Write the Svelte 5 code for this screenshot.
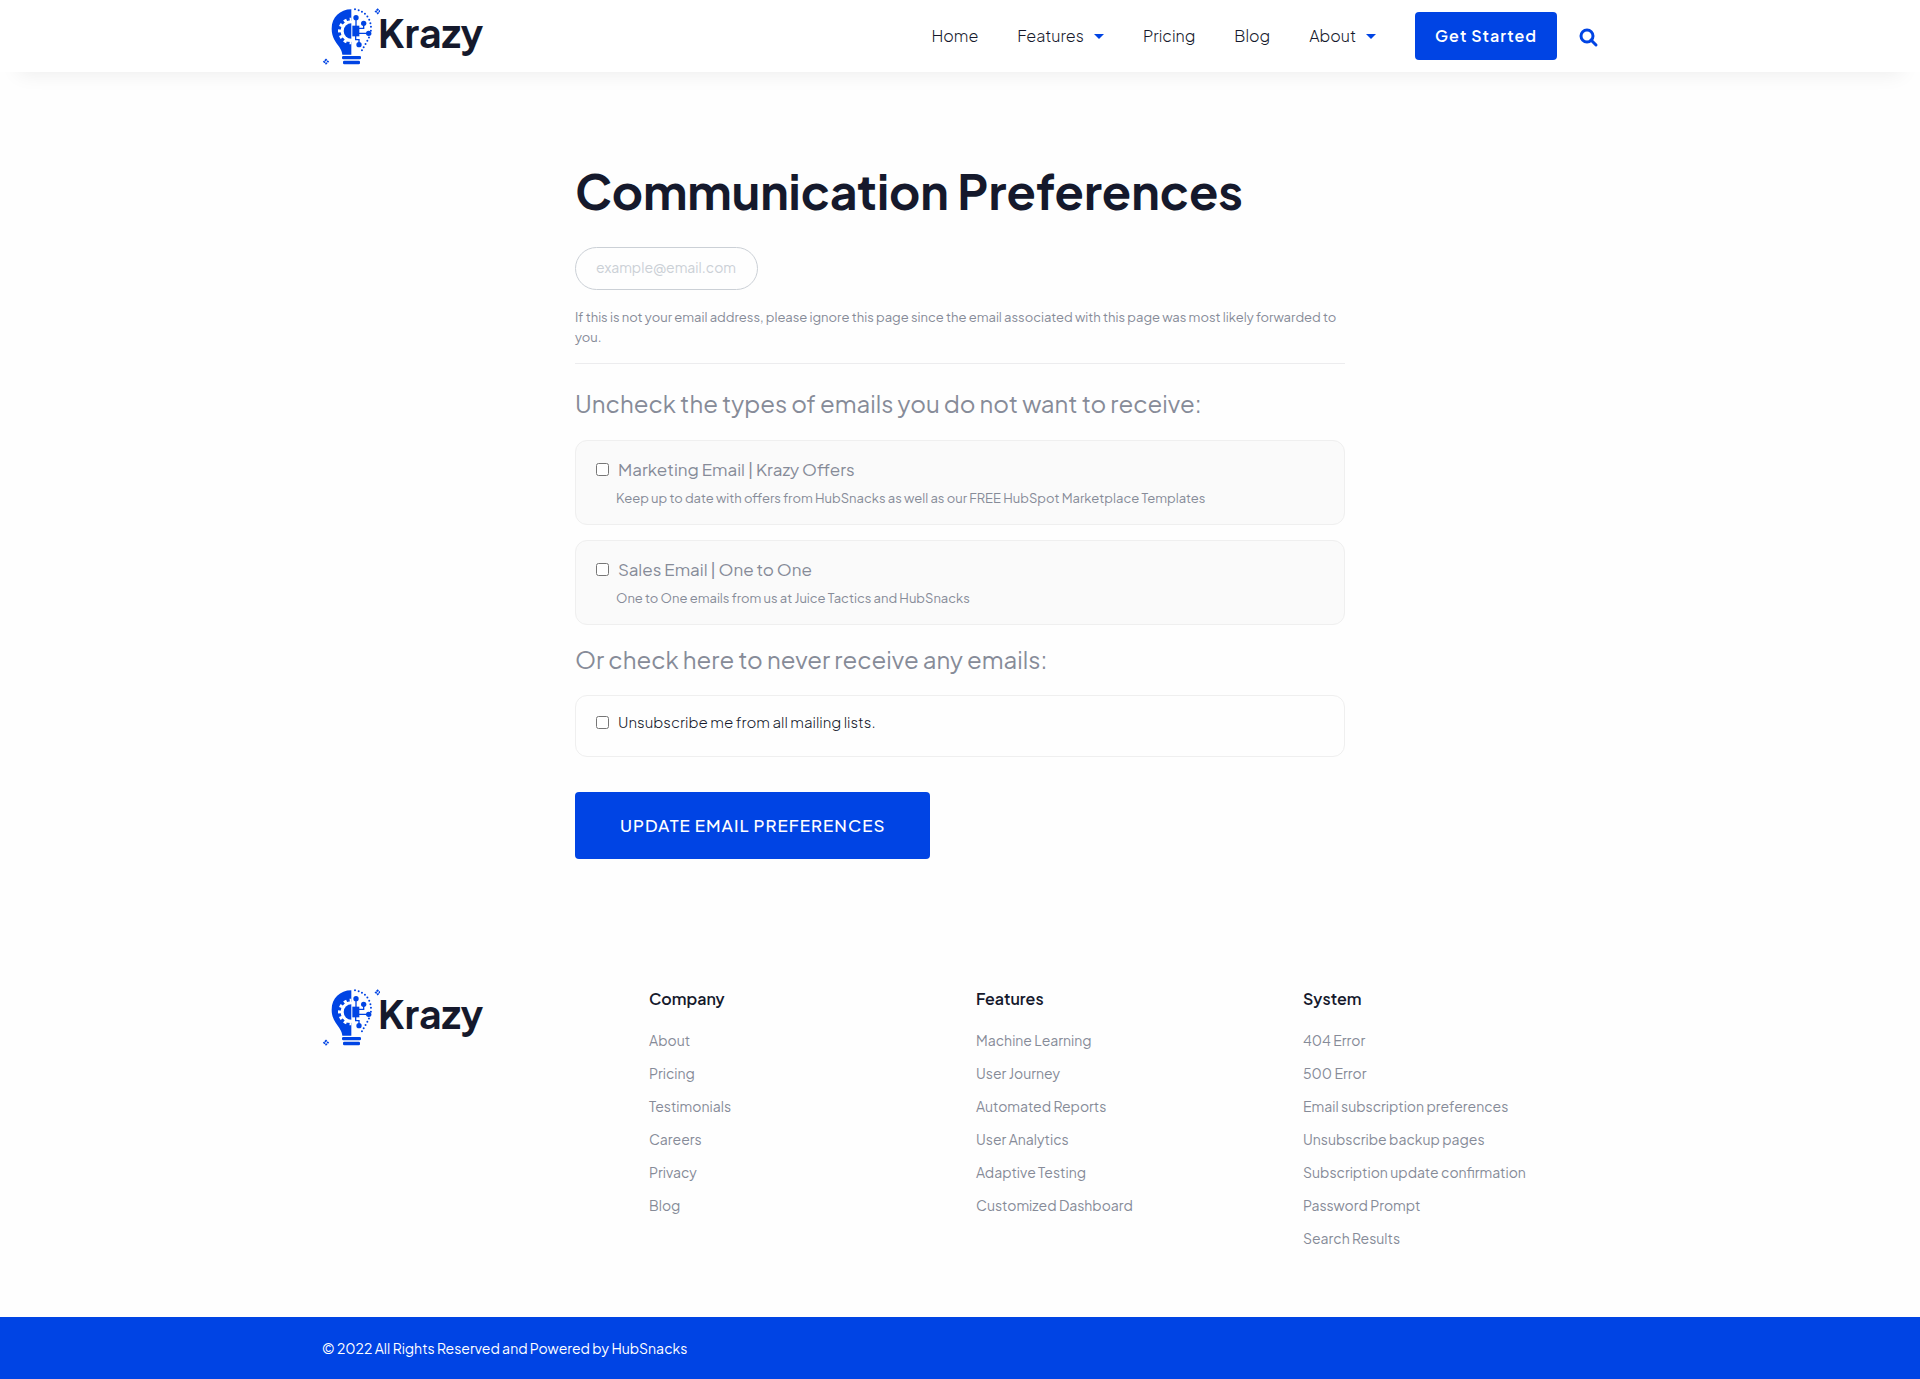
<script>
  const nav = [
    { label: 'Home' },
    { label: 'Features', menu: true },
    { label: 'Pricing' },
    { label: 'Blog' },
    { label: 'About', menu: true },
  ];

  const subscriptions = [
    {
      id: 'marketing',
      title: 'Marketing Email | Krazy Offers',
      text: 'Keep up to date with offers from HubSnacks as well as our FREE HubSpot Marketplace Templates',
    },
    {
      id: 'sales',
      title: 'Sales Email | One to One',
      text: 'One to One emails from us at Juice Tactics and HubSnacks',
    },
  ];

  const columns = [
    { title: 'Company', links: ['About', 'Pricing', 'Testimonials', 'Careers', 'Privacy', 'Blog'] },
    {
      title: 'Features',
      links: ['Machine Learning', 'User Journey', 'Automated Reports', 'User Analytics', 'Adaptive Testing', 'Customized Dashboard'],
    },
    {
      title: 'System',
      links: ['404 Error', '500 Error', 'Email subscription preferences', 'Unsubscribe backup pages', 'Subscription update confirmation', 'Password Prompt', 'Search Results'],
    },
  ];
</script>

{#snippet logo()}
  <a class="logo" href="#home" aria-label="Krazy">
    <svg class="bulb" viewBox="36 20 174 174" aria-hidden="true">
      <path class="fill" d="M124 27C90 27 65 51 65 85C65 112 78 125 88 140C94 149 96 156 97 163H124V124H112L98 110L92 92L98 74L112 62H124Z" />
      <path class="cut" d="M124 60A32 32 0 0 0 124 124Z" />
      <path class="teeth" d="M124 57A35 35 0 0 0 124 127" />
      <path class="fill" d="M124 69A23 23 0 0 0 124 115Z" />
      <path class="fill" d="M127 76H148V108H127Z" />
      <path class="wire" d="M138 52V78M161 69V84H146M146 99H176M137 106V118H147V133" />
      <circle class="fill" cx="138" cy="52" r="8" />
      <circle class="fill" cx="161" cy="69" r="8" />
      <circle class="fill" cx="176" cy="99" r="8" />
      <circle class="fill" cx="147" cy="133" r="8" />
      <path class="dots" d="M135 27C164 31 183 54 183 84C183 113 166 127 152 158" />
      <rect class="fill" x="96" y="167" width="57" height="10" rx="4" />
      <rect class="fill" x="99" y="181" width="51" height="11" rx="4" />
      <path class="spark" d="M203 27L209 33L203 39L197 33Z" />
      <path class="spark" d="M48 178L54 184L48 190L42 184Z" />
    </svg>
    <span>Krazy</span>
  </a>
{/snippet}

<header class="top">
  <div class="wrap bar">
    {@render logo()}
    <nav aria-label="Main">
      {#each nav as item}
        <a class="item" href="#{item.label.toLowerCase()}">
          {item.label}
          {#if item.menu}<svg class="caret" viewBox="0 0 10 5" aria-hidden="true"><path d="M0 0H10L5 5Z" /></svg>{/if}
        </a>
      {/each}
      <a class="cta" href="#start">Get Started</a>
      <button class="search" type="button" aria-label="Search">
        <svg viewBox="0 0 18 18" aria-hidden="true">
          <circle cx="7" cy="7" r="6" />
          <path d="M11 11L16 16" />
        </svg>
      </button>
    </nav>
  </div>
</header>

<main>
  <form onsubmit={(e) => e.preventDefault()}>
    <h1>Communication Preferences</h1>
    <input class="email" type="email" placeholder="example@email.com" aria-label="Email address" />
    <p class="note">
      If this is not your email address, please ignore this page since the email associated with this page was most likely forwarded to you.
    </p>
    <hr />
    <h2>Uncheck the types of emails you do not want to receive:</h2>
    {#each subscriptions as sub}
      <div class="card">
        <label for={sub.id}><input type="checkbox" id={sub.id} /><span>{sub.title}</span></label>
        <p>{sub.text}</p>
      </div>
    {/each}
    <h2>Or check here to never receive any emails:</h2>
    <div class="card plain">
      <label for="all"><input type="checkbox" id="all" /><span>Unsubscribe me from all mailing lists.</span></label>
    </div>
    <button class="submit" type="submit">UPDATE EMAIL PREFERENCES</button>
  </form>
</main>

<footer>
  <div class="wrap columns">
    {@render logo()}
    {#each columns as col}
      <section>
        <h3>{col.title}</h3>
        <ul>
          {#each col.links as link}
            <li><a href="#{link.toLowerCase().replaceAll(' ', '-')}">{link}</a></li>
          {/each}
        </ul>
      </section>
    {/each}
  </div>
  <div class="legal">
    <div class="wrap">© 2022 All Rights Reserved and Powered by HubSnacks</div>
  </div>
</footer>

<style>
  :global(body) {
    background: #fefefe;
    color: #15192c;
    font-family: 'Plus Jakarta Sans', Inter, 'Liberation Sans', sans-serif;
    font-size: 14px;
  }

  a {
    color: inherit;
    text-decoration: none;
  }

  button,
  input {
    font-family: inherit;
  }

  .wrap {
    box-sizing: border-box;
    max-width: 1308px;
    margin: 0 auto;
    padding: 0 16px;
  }

  .top {
    background: #fff;
    box-shadow: 0 20px 20px -18px rgba(0, 0, 0, 0.07);
  }

  .bar {
    display: flex;
    justify-content: space-between;
    align-items: center;
    height: 72px;
  }

  .logo {
    display: flex;
    align-items: flex-start;
    height: 58px;
    color: #15192c;
    font-size: 39px;
    font-weight: 700;
    line-height: 51px;
  }

  .bulb {
    width: 58px;
    height: 58px;
    margin-right: -2px;
  }

  .fill {
    fill: #0044e4;
  }

  .cut {
    fill: #fff;
  }

  .teeth {
    fill: none;
    stroke: #fff;
    stroke-width: 10;
    stroke-dasharray: 9 9;
    stroke-dashoffset: 4;
  }

  .wire {
    fill: none;
    stroke: #0044e4;
    stroke-width: 4;
  }

  .dots {
    fill: none;
    stroke: #0044e4;
    stroke-width: 6;
    stroke-linecap: round;
    stroke-dasharray: 0 11;
  }

  .spark {
    fill: none;
    stroke: #0044e4;
    stroke-width: 5;
    stroke-dasharray: 6 2;
    stroke-dashoffset: 3;
  }

  nav {
    display: flex;
    align-items: center;
    gap: 39px;
  }

  .item {
    display: flex;
    align-items: center;
    gap: 10px;
    font-size: 16px;
    font-weight: 300;
    line-height: 24px;
  }

  .caret {
    width: 10px;
    height: 5px;
    fill: #0044e4;
  }

  .cta {
    padding: 12px 20px;
    border-radius: 4px;
    background: #0044e4;
    color: #fff;
    font-size: 16px;
    font-weight: 600;
    letter-spacing: 1px;
    line-height: 24px;
  }

  .search {
    display: flex;
    margin-left: -16px;
    padding: 4px 0 0;
    border: 0;
    background: none;
  }

  .search svg {
    width: 18px;
    height: 18px;
    fill: none;
    stroke: #0044e4;
    stroke-width: 3;
    stroke-linecap: round;
    overflow: visible;
  }

  main {
    max-width: 770px;
    margin: 0 auto;
    padding: 88px 16px 115px;
  }

  h1 {
    margin: 0 0 25px;
    font-size: 48px;
    font-weight: 700;
    line-height: 62px;
  }

  .email {
    display: block;
    box-sizing: border-box;
    width: 183px;
    height: 43px;
    padding: 0 20px 3px;
    border: 1px solid #cbd0d6;
    border-radius: 22px;
    background: #fefefe;
    font-size: 14px;
  }

  .email::placeholder {
    color: #cbd0d6;
  }

  .note {
    margin: 17px 0 16px;
    color: #868b98;
    font-size: 13px;
    line-height: 20px;
  }

  hr {
    height: 1px;
    margin: 0;
    border: 0;
    background: #ececee;
  }

  h2 {
    margin: 23px 0 20px;
    color: #868b98;
    font-size: 24px;
    font-weight: 400;
    line-height: 33px;
  }

  .card {
    margin-bottom: 15px;
    padding: 17px 20px 16px;
    border: 1px solid #efefef;
    border-radius: 12px;
    background: #fafafa;
    color: #868b98;
  }

  .card + h2 {
    margin: 18px 0 19px;
  }

  .card label {
    display: flex;
    align-items: center;
    gap: 9px;
    font-size: 17px;
    font-weight: 400;
    line-height: 22px;
  }

  .card label input {
    width: 13px;
    height: 13px;
    margin: 0;
  }

  .card p {
    margin: 8px 0 0 20px;
    font-size: 13px;
    line-height: 20px;
  }

  .plain {
    margin-bottom: 35px;
    padding: 15px 20px 23px;
    background: #fefefe;
    color: #15192c;
  }

  .plain label {
    font-size: 15px;
    font-weight: 300;
  }

  .submit {
    padding: 21px 45px;
    border: 0;
    border-radius: 4px;
    background: #0044e4;
    color: #fff;
    font-size: 17px;
    font-weight: 500;
    letter-spacing: 1px;
    line-height: 25px;
  }

  .columns {
    display: grid;
    grid-template-columns: repeat(4, 1fr);
    gap: 32px;
    padding-top: 13px;
    padding-bottom: 69px;
  }

  .columns .logo {
    margin-top: 1px;
  }

  h3 {
    margin: 0 0 19px;
    font-size: 16px;
    font-weight: 600;
    line-height: 24px;
  }

  ul {
    display: grid;
    gap: 13px;
    margin: 0;
    padding: 0;
    list-style: none;
    color: #868b98;
    line-height: 20px;
  }

  .legal {
    background: #0044e4;
    color: #fff;
    line-height: 62px;
  }
</style>
